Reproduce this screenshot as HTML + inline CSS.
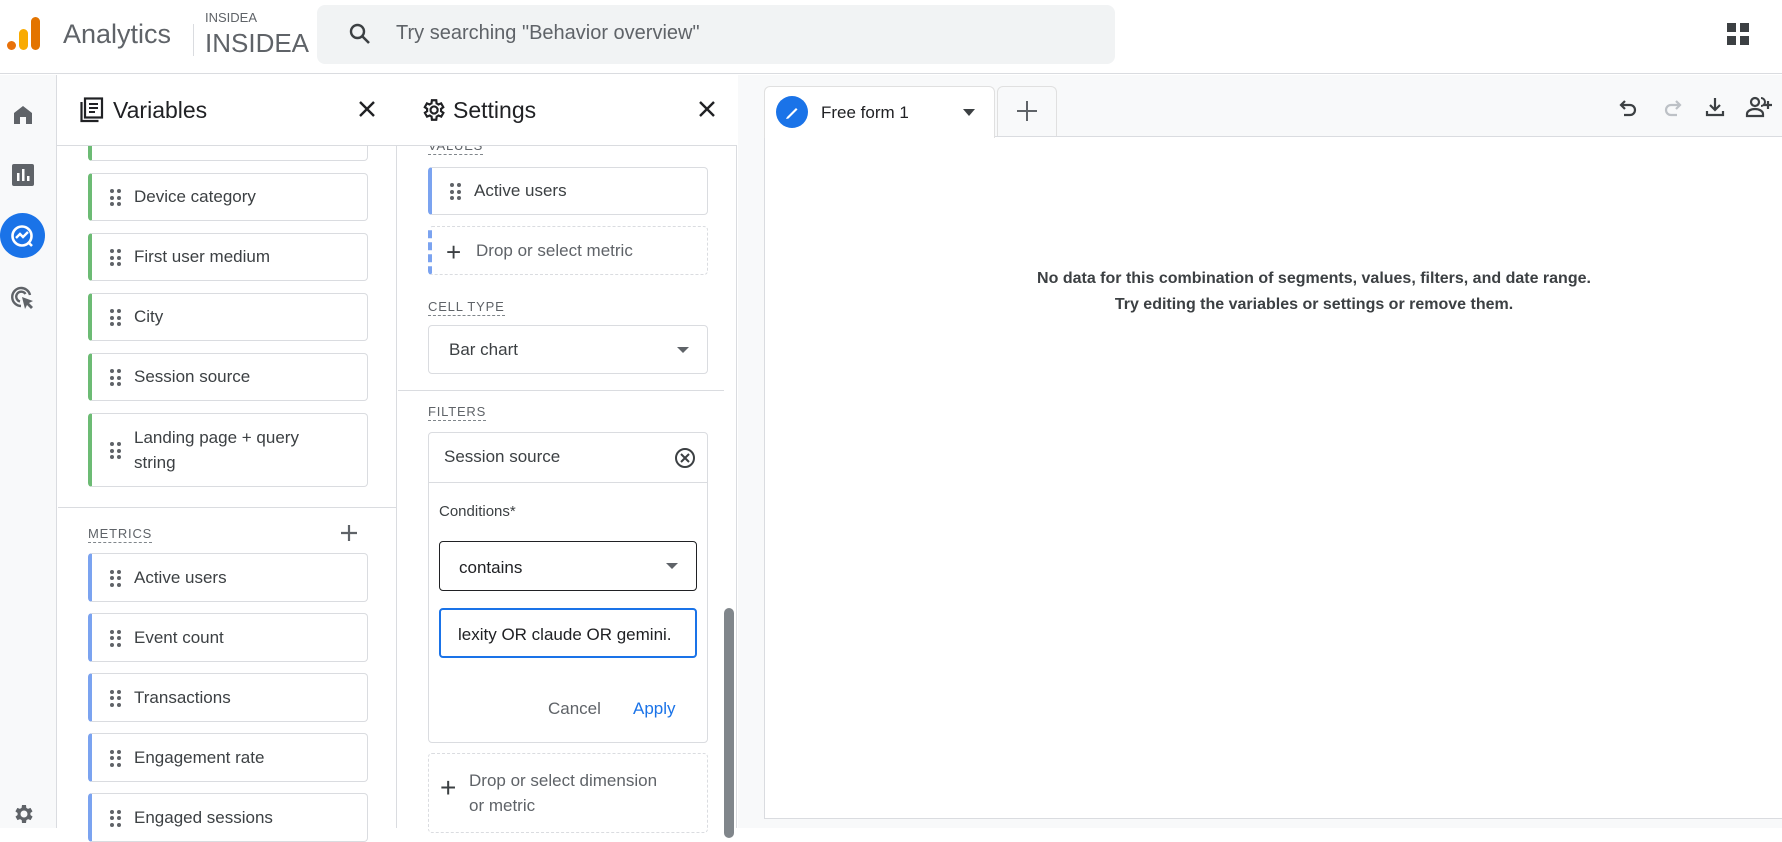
<!DOCTYPE html>
<html><head><meta charset="utf-8"><style>
*{box-sizing:border-box;margin:0;padding:0}
body{width:1782px;height:828px;overflow:hidden;background:#fff;font-family:"Liberation Sans",Arial,sans-serif;color:#202124;position:relative}
.abs{position:absolute}
.card{position:absolute;background:#fff;border:1px solid #dadce0;border-radius:4px;font-size:17px;color:#3c4043;display:flex;align-items:center;padding-left:42px}
.card.g{border-left:4px solid #6cbb74}
.card.b{border-left:4px solid #7ba3f0}
.dots{position:absolute;left:18px;top:50%;margin-top:-8px;width:11px;height:17px}
.dots i{position:absolute;width:4px;height:4px;border-radius:50%;background:#5f6368}
.lbl{position:absolute;font-size:13px;letter-spacing:.8px;color:#5f6368;border-bottom:1px dashed #80868b;padding-bottom:1px}
</style></head><body>
<div class="abs" style="left:0;top:0;width:1782px;height:74px;border-bottom:1px solid #dadce0"></div>
<svg class="abs" style="left:7px;top:17px" width="34" height="36"><rect x="0" y="24" width="9" height="9" rx="4.5" fill="#e8710a"/><rect x="12" y="12" width="9" height="21" rx="4.5" fill="#f9ab00"/><rect x="24" y="0" width="9" height="33" rx="4.5" fill="#e37400"/></svg>
<div class="abs" style="left:63px;top:19px;font-size:27px;color:#5f6368">Analytics</div>
<div class="abs" style="left:193px;top:24px;width:1px;height:32px;background:#dadce0"></div>
<div class="abs" style="left:205px;top:10px;font-size:13px;color:#5f6368">INSIDEA</div>
<div class="abs" style="left:205px;top:28px;font-size:26px;color:#5f6368">INSIDEA</div>
<div class="abs" style="left:317px;top:5px;width:798px;height:59px;background:#f1f3f4;border-radius:8px"></div>
<svg class="abs" style="left:348px;top:22px" width="24" height="24" viewBox="0 0 24 24"><circle cx="9.5" cy="9.5" r="6.5" fill="none" stroke="#3c4043" stroke-width="2.4"/><path d="M14 14l7 7" stroke="#3c4043" stroke-width="2.6"/></svg>
<div class="abs" style="left:396px;top:22px;font-size:20px;color:#5f6368">Try searching "Behavior overview"</div>
<svg class="abs" style="left:1727px;top:23px" width="23" height="23"><rect x="0" y="0" width="9" height="9" fill="#3c4043"/><rect x="13" y="0" width="9" height="9" fill="#3c4043"/><rect x="0" y="13" width="9" height="9" fill="#3c4043"/><rect x="13" y="13" width="9" height="9" fill="#3c4043"/></svg>

<div class="abs" style="left:0;top:75px;width:57px;height:753px;background:#f8f9fa;border-right:1px solid #dadce0"></div>
<svg class="abs" style="left:11px;top:103px" width="24" height="24" viewBox="0 0 24 24"><path d="M3 10L12 3l9 7v11h-6v-7h-6v7H3z" fill="#5f6368"/></svg>
<svg class="abs" style="left:12px;top:164px" width="22" height="22" viewBox="0 0 22 22"><rect width="22" height="22" rx="2" fill="#5f6368"/><rect x="5" y="9" width="2.5" height="8" fill="#fff"/><rect x="10" y="5" width="2.5" height="12" fill="#fff"/><rect x="15" y="12" width="2.5" height="5" fill="#fff"/></svg>
<div class="abs" style="left:0;top:213px;width:45px;height:45px;border-radius:50%;background:#1a73e8"></div>
<svg class="abs" style="left:9px;top:223px" width="26" height="26" viewBox="0 0 26 26"><circle cx="13" cy="13" r="9.5" fill="none" stroke="#fff" stroke-width="2.6"/><path d="M7 15l4-4 3 3 5-5" fill="none" stroke="#fff" stroke-width="2.4"/><path d="M19 19l4 4" stroke="#fff" stroke-width="2.6"/></svg>
<svg class="abs" style="left:10px;top:285px" width="26" height="26" viewBox="0 0 26 26"><path d="M20 10A9 9 0 1 0 11 21" fill="none" stroke="#5f6368" stroke-width="2.4"/><path d="M15.5 9A5 5 0 1 0 10 16.5" fill="none" stroke="#5f6368" stroke-width="2.4"/><path d="M12 12l11 4-4 2 4 4-2 2-4-4-2 4z" fill="#5f6368"/></svg>
<svg class="abs" style="left:11px;top:802px" width="24" height="24" viewBox="0 0 24 24"><path d="M19.4 13a7.5 7.5 0 0 0 0-2l2.1-1.6-2-3.5-2.5 1a7.7 7.7 0 0 0-1.7-1L15 3h-4l-.4 2.9a7.7 7.7 0 0 0-1.7 1l-2.5-1-2 3.5L6.6 11a7.5 7.5 0 0 0 0 2l-2.1 1.6 2 3.5 2.5-1a7.7 7.7 0 0 0 1.7 1L11 21h4l.4-2.9a7.7 7.7 0 0 0 1.7-1l2.5 1 2-3.5zM13 15.5a3.5 3.5 0 1 1 0-7 3.5 3.5 0 0 1 0 7z" fill="#5f6368"/></svg>

<div class="abs" style="left:57px;top:75px;width:340px;height:753px;border-right:1px solid #dadce0"></div>

<div class="card g" style="left:88px;top:120px;width:280px;height:41px"></div>
<div class="card g" style="left:88px;top:173px;width:280px;height:48px"><span class="dots"><i style="left:0;top:0"></i><i style="left:7px;top:0"></i><i style="left:0;top:6.5px"></i><i style="left:7px;top:6.5px"></i><i style="left:0;top:13px"></i><i style="left:7px;top:13px"></i></span>Device category</div>
<div class="card g" style="left:88px;top:233px;width:280px;height:48px"><span class="dots"><i style="left:0;top:0"></i><i style="left:7px;top:0"></i><i style="left:0;top:6.5px"></i><i style="left:7px;top:6.5px"></i><i style="left:0;top:13px"></i><i style="left:7px;top:13px"></i></span>First user medium</div>
<div class="card g" style="left:88px;top:293px;width:280px;height:48px"><span class="dots"><i style="left:0;top:0"></i><i style="left:7px;top:0"></i><i style="left:0;top:6.5px"></i><i style="left:7px;top:6.5px"></i><i style="left:0;top:13px"></i><i style="left:7px;top:13px"></i></span>City</div>
<div class="card g" style="left:88px;top:353px;width:280px;height:48px"><span class="dots"><i style="left:0;top:0"></i><i style="left:7px;top:0"></i><i style="left:0;top:6.5px"></i><i style="left:7px;top:6.5px"></i><i style="left:0;top:13px"></i><i style="left:7px;top:13px"></i></span>Session source</div>
<div class="card g" style="left:88px;top:413px;width:280px;height:74px;line-height:25px"><span class="dots"><i style="left:0;top:0"></i><i style="left:7px;top:0"></i><i style="left:0;top:6.5px"></i><i style="left:7px;top:6.5px"></i><i style="left:0;top:13px"></i><i style="left:7px;top:13px"></i></span>Landing page + query<br>string</div>
<div class="abs" style="left:58px;top:507px;width:339px;height:1px;background:#dadce0"></div>
<div class="lbl" style="left:88px;top:526px">METRICS</div>
<svg class="abs" style="left:340px;top:524px" width="18" height="18"><path d="M9 1v16M1 9h16" stroke="#5f6368" stroke-width="2.2"/></svg>
<div class="card b" style="left:88px;top:553px;width:280px;height:49px"><span class="dots"><i style="left:0;top:0"></i><i style="left:7px;top:0"></i><i style="left:0;top:6.5px"></i><i style="left:7px;top:6.5px"></i><i style="left:0;top:13px"></i><i style="left:7px;top:13px"></i></span>Active users</div>
<div class="card b" style="left:88px;top:613px;width:280px;height:49px"><span class="dots"><i style="left:0;top:0"></i><i style="left:7px;top:0"></i><i style="left:0;top:6.5px"></i><i style="left:7px;top:6.5px"></i><i style="left:0;top:13px"></i><i style="left:7px;top:13px"></i></span>Event count</div>
<div class="card b" style="left:88px;top:673px;width:280px;height:49px"><span class="dots"><i style="left:0;top:0"></i><i style="left:7px;top:0"></i><i style="left:0;top:6.5px"></i><i style="left:7px;top:6.5px"></i><i style="left:0;top:13px"></i><i style="left:7px;top:13px"></i></span>Transactions</div>
<div class="card b" style="left:88px;top:733px;width:280px;height:49px"><span class="dots"><i style="left:0;top:0"></i><i style="left:7px;top:0"></i><i style="left:0;top:6.5px"></i><i style="left:7px;top:6.5px"></i><i style="left:0;top:13px"></i><i style="left:7px;top:13px"></i></span>Engagement rate</div>
<div class="card b" style="left:88px;top:793px;width:280px;height:49px"><span class="dots"><i style="left:0;top:0"></i><i style="left:7px;top:0"></i><i style="left:0;top:6.5px"></i><i style="left:7px;top:6.5px"></i><i style="left:0;top:13px"></i><i style="left:7px;top:13px"></i></span>Engaged sessions</div>
<div class="abs" style="left:57px;top:75px;width:340px;height:71px;border-bottom:1px solid #dadce0;background:#fff;z-index:2"></div>
<svg class="abs" style="left:80px;top:97px;z-index:3" width="24" height="26" viewBox="0 0 24 26"><rect x="5" y="1.5" width="17" height="19" fill="none" stroke="#202124" stroke-width="2.2"/><path d="M1.5 5v19h17" fill="none" stroke="#202124" stroke-width="2.2"/><path d="M9 7h9M9 11h9M9 15h6" stroke="#202124" stroke-width="2"/></svg>
<div class="abs" style="left:113px;top:97px;font-size:23px;z-index:3">Variables</div>
<svg class="abs" style="left:358px;top:100px;z-index:3" width="18" height="18"><path d="M2 2l14 14M16 2L2 16" stroke="#202124" stroke-width="2.4"/></svg>

<div class="abs" style="left:397px;top:75px;width:340px;height:753px;border-right:1px solid #dadce0"></div>
<div class="lbl" style="left:428px;top:138px">VALUES</div>
<div class="card b" style="left:428px;top:167px;width:280px;height:48px"><span class="dots"><i style="left:0;top:0"></i><i style="left:7px;top:0"></i><i style="left:0;top:6.5px"></i><i style="left:7px;top:6.5px"></i><i style="left:0;top:13px"></i><i style="left:7px;top:13px"></i></span>Active users</div>
<div class="card" style="left:428px;top:226px;width:280px;height:49px;border:1px dashed #dadce0;border-left:4px dashed #7ba3f0;color:#5f6368;padding-left:44px"><span class="abs" style="left:14px;top:10px;font-size:26px;font-weight:300;color:#3c4043">+</span>Drop or select metric</div>
<div class="lbl" style="left:428px;top:299px">CELL TYPE</div>
<div class="card" style="left:428px;top:325px;width:280px;height:49px;padding-left:20px">Bar chart<span class="abs" style="right:18px;top:21px;border:6px solid transparent;border-top:6px solid #5f6368"></span></div>
<div class="abs" style="left:398px;top:390px;width:326px;height:1px;background:#dadce0"></div>
<div class="lbl" style="left:428px;top:404px">FILTERS</div>
<div class="abs" style="left:428px;top:432px;width:280px;height:311px;border:1px solid #dadce0;border-radius:4px"></div>
<div class="abs" style="left:429px;top:482px;width:278px;height:1px;background:#dadce0"></div>
<div class="abs" style="left:444px;top:447px;font-size:17px;color:#3c4043">Session source</div>
<svg class="abs" style="left:674px;top:447px" width="22" height="22"><circle cx="11" cy="11" r="9" fill="none" stroke="#3c4043" stroke-width="2"/><path d="M7 7l8 8M15 7l-8 8" stroke="#3c4043" stroke-width="2"/></svg>
<div class="abs" style="left:439px;top:503px;font-size:15px;color:#3c4043">Conditions*</div>
<div class="abs" style="left:439px;top:541px;width:258px;height:50px;border:1px solid #202124;border-radius:4px;font-size:17px;padding:16px 0 0 19px">contains<span class="abs" style="right:18px;top:21px;border:6px solid transparent;border-top:6px solid #5f6368"></span></div>
<div class="abs" style="left:439px;top:608px;width:258px;height:50px;border:2px solid #1a73e8;border-radius:4px;font-size:17px;padding:15px 0 0 17px;overflow:hidden;white-space:nowrap">lexity OR claude OR gemini.</div>
<div class="abs" style="left:548px;top:699px;font-size:17px;color:#5f6368">Cancel</div>
<div class="abs" style="left:633px;top:699px;font-size:17px;color:#1a73e8">Apply</div>
<div class="abs" style="left:428px;top:753px;width:280px;height:80px;border:1px dashed #dadce0;border-radius:4px"></div>
<div class="abs" style="left:440px;top:772px;font-size:28px;font-weight:300;color:#3c4043">+</div>
<div class="abs" style="left:469px;top:768px;font-size:17px;line-height:25px;color:#5f6368">Drop or select dimension<br>or metric</div>
<div class="abs" style="left:724px;top:608px;width:10px;height:230px;border-radius:5px;background:#80868b"></div>
<div class="abs" style="left:397px;top:75px;width:340px;height:71px;border-bottom:1px solid #dadce0;background:#fff"></div>
<svg class="abs" style="left:420px;top:97px" width="26" height="26" viewBox="0 0 24 24"><path d="M19.4 13a7.5 7.5 0 0 0 0-2l2.1-1.6-2-3.5-2.5 1a7.7 7.7 0 0 0-1.7-1L15 3h-4l-.4 2.9a7.7 7.7 0 0 0-1.7 1l-2.5-1-2 3.5L6.6 11a7.5 7.5 0 0 0 0 2l-2.1 1.6 2 3.5 2.5-1a7.7 7.7 0 0 0 1.7 1L11 21h4l.4-2.9a7.7 7.7 0 0 0 1.7-1l2.5 1 2-3.5z" fill="none" stroke="#202124" stroke-width="2"/><circle cx="13" cy="12" r="3.3" fill="none" stroke="#202124" stroke-width="2"/></svg>
<div class="abs" style="left:453px;top:97px;font-size:23px">Settings</div>
<svg class="abs" style="left:698px;top:100px" width="18" height="18"><path d="M2 2l14 14M16 2L2 16" stroke="#202124" stroke-width="2.4"/></svg>

<div class="abs" style="left:738px;top:75px;width:1044px;height:753px;background:#f8f9fa"></div>
<div class="abs" style="left:764px;top:136px;width:1018px;height:683px;background:#fff;border:1px solid #dadce0;border-right:none"></div>
<div class="abs" style="left:764px;top:86px;width:231px;height:52px;background:#fff;border:1px solid #e0e0e0;border-bottom:none;border-radius:6px 6px 0 0"></div>
<div class="abs" style="left:997px;top:86px;width:60px;height:50px;background:#f8f9fa;border:1px solid #e0e0e0;border-bottom:none;border-radius:6px 6px 0 0"></div>
<div class="abs" style="left:776px;top:96px;width:32px;height:32px;border-radius:50%;background:#1a73e8"></div>
<svg class="abs" style="left:783px;top:103px" width="18" height="18"><path d="M4 14l9-9 1.5 1.5-9 9L3 16z" fill="#fff"/></svg>
<div class="abs" style="left:821px;top:103px;font-size:17px">Free form 1</div>
<div class="abs" style="left:963px;top:109px;border:6px solid transparent;border-top:7px solid #3c4043"></div>
<svg class="abs" style="left:1016px;top:100px" width="22" height="22"><path d="M11 1v20M1 11h20" stroke="#5f6368" stroke-width="2"/></svg>
<svg class="abs" style="left:1617px;top:96px" width="24" height="24" viewBox="0 0 24 24"><path d="M8 5L4 9l4 4" fill="none" stroke="#3c4043" stroke-width="2.2"/><path d="M4 9h9a5 5 0 0 1 0 10H7" fill="none" stroke="#3c4043" stroke-width="2.2"/></svg>
<svg class="abs" style="left:1660px;top:96px" width="24" height="24" viewBox="0 0 24 24"><path d="M16 5l4 4-4 4" fill="none" stroke="#bdc1c6" stroke-width="2.2"/><path d="M20 9h-9a5 5 0 0 0 0 10h6" fill="none" stroke="#bdc1c6" stroke-width="2.2"/></svg>
<svg class="abs" style="left:1703px;top:95px" width="24" height="24" viewBox="0 0 24 24"><path d="M12 3v12M7 10l5 5 5-5" fill="none" stroke="#3c4043" stroke-width="2.2"/><path d="M4 16v4h16v-4" fill="none" stroke="#3c4043" stroke-width="2.2"/></svg>
<svg class="abs" style="left:1745px;top:95px" width="28" height="24" viewBox="0 0 28 24"><circle cx="10" cy="7" r="4" fill="none" stroke="#3c4043" stroke-width="2.2"/><path d="M2 21v-2c0-3 4-5 8-5s8 2 8 5v2z" fill="none" stroke="#3c4043" stroke-width="2.2"/><path d="M16 3a4 4 0 0 1 0 8" fill="none" stroke="#3c4043" stroke-width="2"/><path d="M23 6v8M19 10h8" stroke="#3c4043" stroke-width="2.2"/></svg>
<div class="abs" style="left:764px;top:266px;width:1100px;text-align:center;font-size:16px;font-weight:bold;color:#3c4043;line-height:26px">No data for this combination of segments, values, filters, and date range.<br>Try editing the variables or settings or remove them.</div>
</body></html>
